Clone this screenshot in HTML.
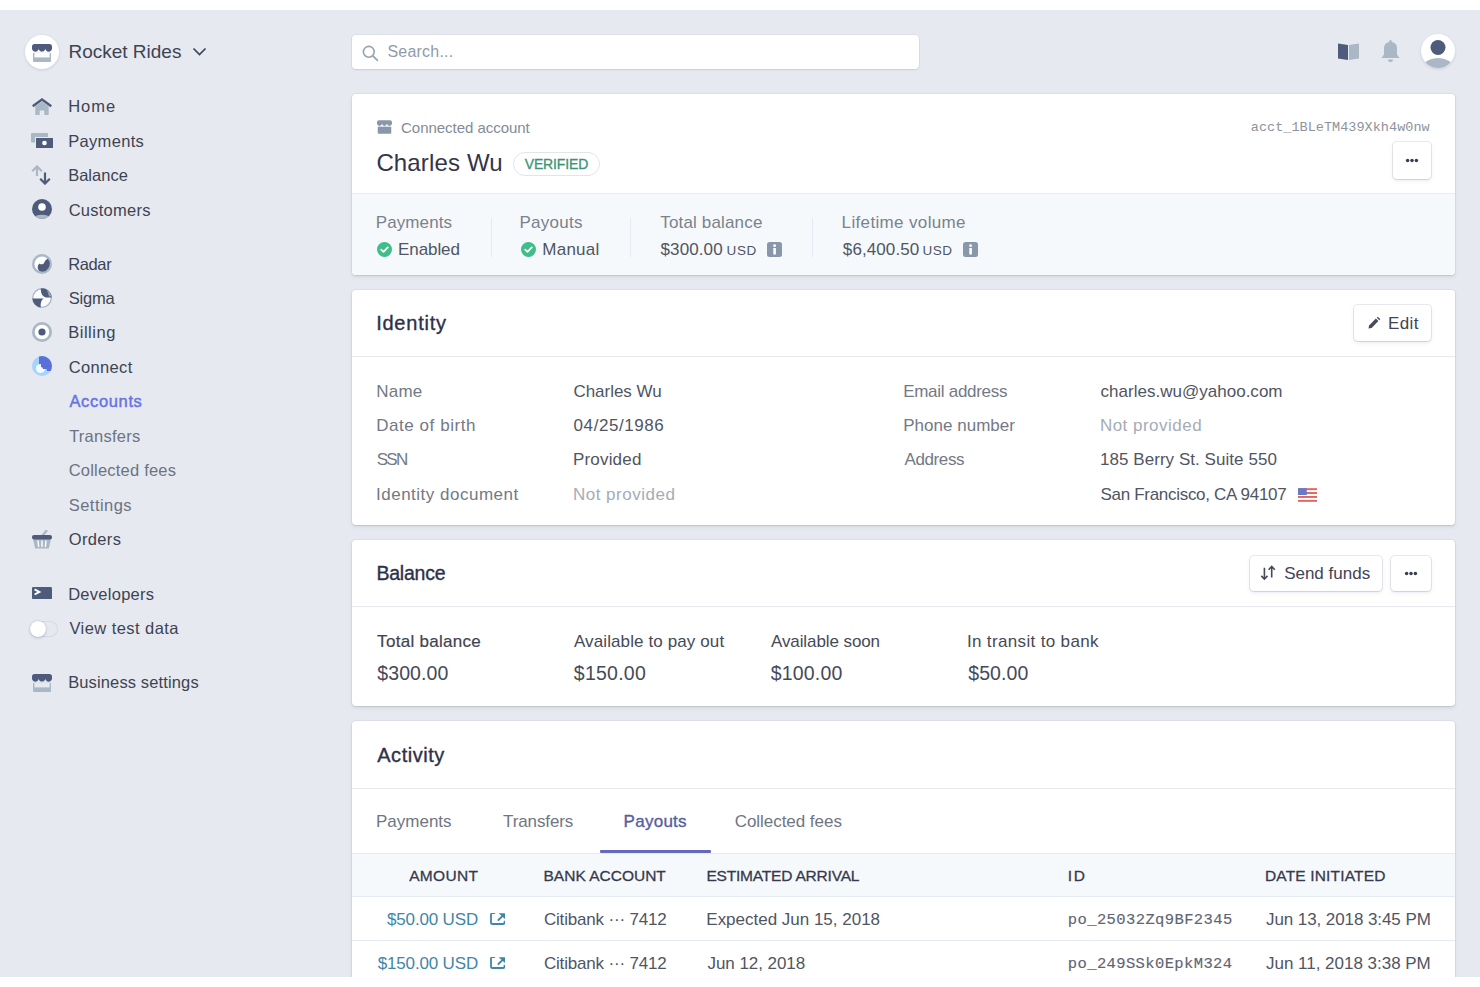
<!DOCTYPE html>
<html><head><meta charset="utf-8"><title>Rocket Rides - Charles Wu</title>
<style>
html,body{margin:0;padding:0;}
body{width:1480px;height:987px;position:relative;overflow:hidden;background:#fff;font-family:'Liberation Sans', sans-serif;}
#bg{position:absolute;left:0;top:10px;width:1480px;height:967px;background:#e6e9f0;overflow:hidden;}
.t{position:absolute;white-space:nowrap;line-height:1;}
</style></head><body>
<div id="bg">
<div style="position:absolute;left:0;top:-10px;width:1480px;height:987px">
<div style="position:absolute;left:25px;top:35px;width:34px;height:34px;border-radius:50%;background:#fff;box-shadow:0 1px 3px rgba(50,50,93,.15)"></div>
<svg style="position:absolute;left:32px;top:43.5px" width="20" height="18" viewBox="0 0 20 18">
<rect x="1" y="8.8" width="18" height="9.2" rx="1" fill="#aab7c4"/>
<rect x="2.4" y="8.8" width="15.2" height="4.6" fill="#fff"/>
<path d="M0 2.6A2.6 2.6 0 0 1 2.6 0h14.8A2.6 2.6 0 0 1 20 2.6V4.8A3.38 3.38 0 0 1 13.33 4.8 3.38 3.38 0 0 1 6.67 4.8 3.38 3.38 0 0 1 0 4.8z" fill="#4f5b7a"/>
</svg>
<div class="t" id="t0" style="left:68.43px;top:42.32px;font-size:19px;color:#3e4352;">Rocket Rides</div>
<svg style="position:absolute;left:192px;top:47px" width="15" height="10" viewBox="0 0 15 10"><path d="M1.5 1.5l6 6 6-6" fill="none" stroke="#3d4459" stroke-width="1.7"/></svg>
<div class="t" id="t1" style="left:68.14px;top:98.33px;font-size:16.5px;color:#3e4352;letter-spacing:1.022px;">Home</div>
<div class="t" id="t2" style="left:68.14px;top:132.73px;font-size:16.5px;color:#3e4352;letter-spacing:0.339px;">Payments</div>
<div class="t" id="t3" style="left:68.14px;top:166.73px;font-size:16.5px;color:#3e4352;letter-spacing:0.026px;">Balance</div>
<div class="t" id="t4" style="left:68.67px;top:201.53px;font-size:16.5px;color:#3e4352;letter-spacing:0.254px;">Customers</div>
<div class="t" id="t5" style="left:68.14px;top:255.83px;font-size:16.5px;color:#3e4352;letter-spacing:-0.356px;">Radar</div>
<div class="t" id="t6" style="left:68.76px;top:290.03px;font-size:16.5px;color:#3e4352;letter-spacing:-0.212px;">Sigma</div>
<div class="t" id="t7" style="left:68.14px;top:324.33px;font-size:16.5px;color:#3e4352;letter-spacing:0.548px;">Billing</div>
<div class="t" id="t8" style="left:68.67px;top:358.53px;font-size:16.5px;color:#3e4352;letter-spacing:0.366px;">Connect</div>
<div class="t" id="t9" style="left:69.46px;top:393.43px;font-size:16.5px;color:#6772e5;letter-spacing:0.650px;-webkit-text-stroke:0.45px currentColor;">Accounts</div>
<div class="t" id="t10" style="left:69.13px;top:427.83px;font-size:16.5px;color:#6c7382;letter-spacing:0.247px;">Transfers</div>
<div class="t" id="t11" style="left:68.67px;top:462.33px;font-size:16.5px;color:#6c7382;letter-spacing:0.211px;">Collected fees</div>
<div class="t" id="t12" style="left:68.76px;top:497.03px;font-size:16.5px;color:#6c7382;letter-spacing:0.457px;">Settings</div>
<div class="t" id="t13" style="left:68.72px;top:531.23px;font-size:16.5px;color:#3e4352;letter-spacing:0.347px;">Orders</div>
<div class="t" id="t14" style="left:68.14px;top:585.73px;font-size:16.5px;color:#3e4352;letter-spacing:0.275px;">Developers</div>
<div class="t" id="t15" style="left:69.42px;top:619.93px;font-size:16.5px;color:#3e4352;letter-spacing:0.440px;">View test data</div>
<div class="t" id="t16" style="left:68.14px;top:673.83px;font-size:16.5px;color:#3e4352;letter-spacing:0.134px;">Business settings</div>
<svg style="position:absolute;left:32px;top:97.5px" width="20" height="17" viewBox="0 0 20 17">
<path d="M3.3 8.2L10 3.4l6.7 4.8V17h-4.4v-4.6H7.7V17H3.3z" fill="#aab7c4"/>
<path d="M10 0L20 7.2l-1.4 2L10 3 1.4 9.2 0 7.2z" fill="#4f5b7a"/></svg>
<svg style="position:absolute;left:31px;top:133.3px" width="23" height="15" viewBox="0 0 23 15">
<rect x="0" y="0" width="17" height="9.5" rx="1" fill="#aab7c4"/>
<rect x="4" y="4" width="19" height="11" fill="#e6e9f0"/>
<rect x="5" y="5" width="17" height="10" fill="#4f5b7a"/>
<circle cx="13.5" cy="10" r="2.3" fill="#fff"/></svg>
<svg style="position:absolute;left:31px;top:164.5px" width="21" height="20" viewBox="0 0 21 20">
<path d="M6 11V1.6M1.2 6.2L6 1.4l4.8 4.8" fill="none" stroke="#aab7c4" stroke-width="2.2"/>
<path d="M14 7.5v10.8M9.2 13.8L14 18.6l4.8-4.8" fill="none" stroke="#4f5b7a" stroke-width="2.2"/></svg>
<svg style="position:absolute;left:32px;top:199px" width="20" height="20" viewBox="0 0 20 20">
<defs><clipPath id="cuc"><circle cx="10" cy="10" r="10"/></clipPath></defs>
<circle cx="10" cy="10" r="10" fill="#4f5b7a"/>
<g clip-path="url(#cuc)"><ellipse cx="10" cy="20.5" rx="9" ry="4.8" fill="#aab7c4"/></g>
<circle cx="10" cy="8" r="3.8" fill="#fff"/></svg>
<svg style="position:absolute;left:32px;top:253.5px" width="20" height="20" viewBox="0 0 20 20">
<circle cx="10" cy="10" r="10" fill="#aab7c4"/>
<circle cx="10" cy="10" r="7.6" fill="#fff"/>
<path d="M15.8 4.8A7.6 7.6 0 0 1 7 16.8 5 5 0 0 1 7.5 9.5a3 3 0 0 0 5-1.5 5 5 0 0 1 3.3-3.2z" fill="#4f5b7a"/></svg>
<svg style="position:absolute;left:32px;top:288px" width="20" height="20" viewBox="0 0 20 20">
<circle cx="10" cy="10" r="9.3" fill="#fbfcfd" stroke="#aab7c4" stroke-width="1.3"/>
<path d="M8.8 0.4C8.6 5.5 10.5 9 14 9.4H19.7A9.7 9.7 0 0 0 8.8 0.4z" fill="#4f5b7a"/>
<path d="M14.6 2A9.7 9.7 0 0 1 19.5 8.6H17C16.5 6 15.8 4 14.6 2z" fill="#9aa6bb"/>
<path d="M0.4 10.6H12.2C9.6 11.2 8.2 15 8.8 19.6A9.7 9.7 0 0 1 0.4 10.6z" fill="#4f5b7a"/></svg>
<svg style="position:absolute;left:32px;top:322.3px" width="20" height="20" viewBox="0 0 20 20">
<circle cx="10" cy="10" r="10" fill="#aab7c4"/>
<circle cx="10" cy="10" r="7.3" fill="#fff"/>
<circle cx="10" cy="10" r="3.6" fill="#4f5b7a"/></svg>
<svg style="position:absolute;left:32px;top:356.3px" width="20" height="20" viewBox="0 0 20 20">
<defs><clipPath id="cnc"><circle cx="10" cy="10" r="10"/></clipPath></defs>
<circle cx="10" cy="10" r="10" fill="#a5d3fb"/>
<g clip-path="url(#cnc)">
<path d="M7 0h14v15h-6a4 4 0 0 0-4-4H7z" fill="#5b6fd8"/>
<circle cx="8.5" cy="12.5" r="4.6" fill="#f2fbff"/>
<path d="M9 8h3a3 3 0 0 1 3 3v2h-4a2 2 0 0 0-2-2z" fill="#5b6fd8"/>
</g></svg>
<svg style="position:absolute;left:32px;top:529.5px" width="20" height="19" viewBox="0 0 20 19">
<path d="M10.5 5.5L14.5 0.8" stroke="#aab7c4" stroke-width="2.2" stroke-linecap="round"/>
<path d="M1 9h18l-2.2 9.5H3.2z" fill="#aab7c4"/>
<rect x="0" y="5" width="20" height="4.5" rx="2" fill="#4f5b7a"/>
<path d="M6 11l.6 5.5M10 11v5.5M14 11l-.6 5.5" stroke="#fff" stroke-width="1.4" stroke-linecap="round"/></svg>
<svg style="position:absolute;left:32px;top:586.8px" width="20" height="12.5" viewBox="0 0 20 12.5">
<rect x="0" y="0" width="20" height="12.2" rx="1.3" fill="#4f5b7a"/>
<path d="M2.6 2.3L7.4 4.9 2.6 7.5" fill="none" stroke="#fff" stroke-width="1.9" stroke-linejoin="miter"/></svg>
<svg style="position:absolute;left:32px;top:673.8px" width="20" height="18" viewBox="0 0 20 18">
<rect x="1" y="8.8" width="18" height="9.2" rx="1" fill="#aab7c4"/>
<rect x="2.4" y="8.8" width="15.2" height="4.6" fill="#e6e9f0"/>
<path d="M0 2.6A2.6 2.6 0 0 1 2.6 0h14.8A2.6 2.6 0 0 1 20 2.6V4.8A3.38 3.38 0 0 1 13.33 4.8 3.38 3.38 0 0 1 6.67 4.8 3.38 3.38 0 0 1 0 4.8z" fill="#4f5b7a"/>
</svg>
<div style="position:absolute;left:30px;top:620.5px;width:28px;height:16.5px;border-radius:9px;background:#e6e9f0;box-shadow:inset 0 0 0 1px #d5dbe3;box-sizing:border-box"></div>
<div style="position:absolute;left:29.5px;top:620.5px;width:16.5px;height:16.5px;border-radius:50%;background:#fff;box-shadow:0 1px 3px rgba(50,50,93,.25),0 0 0 .5px rgba(50,50,93,.1)"></div>
<div style="position:absolute;left:352px;top:35px;width:567px;height:34px;background:#fff;border-radius:4px;box-shadow:0 1px 2px rgba(50,50,93,.12),0 0 0 1px rgba(50,50,93,.04)"></div>
<svg style="position:absolute;left:362px;top:44.5px" width="17" height="17" viewBox="0 0 17 17"><circle cx="6.8" cy="6.8" r="5.4" fill="none" stroke="#98a3b1" stroke-width="1.6"/><path d="M10.8 10.8l4.6 4.6" stroke="#98a3b1" stroke-width="1.7" stroke-linecap="round"/></svg>
<div class="t" id="t17" style="left:387.48px;top:44.26px;font-size:16px;color:#8f9bab;letter-spacing:0.204px;">Search...</div>
<svg style="position:absolute;left:1338px;top:42px" width="21" height="18" viewBox="0 0 21 18">
<path d="M0 1.5L10 3v15L0 16.5z" fill="#4f5b7a"/><path d="M11 3l10-1.5v15L11 18z" fill="#aab7c4"/></svg>
<svg style="position:absolute;left:1380px;top:39px" width="21" height="24" viewBox="0 0 21 24">
<path d="M10.5 1a1.2 1.2 0 0 1 1.2 1.2v.9A6.5 6.5 0 0 1 17 9.5v6l2.5 3.5h-18L4 15.5v-6a6.5 6.5 0 0 1 5.3-6.4v-.9A1.2 1.2 0 0 1 10.5 1z" fill="#aab7c4"/>
<path d="M8 20.5h5a2.5 2.5 0 0 1-5 0z" fill="#aab7c4"/></svg>
<div style="position:absolute;left:1421px;top:34px;width:34px;height:34px;border-radius:50%;background:#fff;overflow:hidden;box-shadow:0 1px 3px rgba(50,50,93,.15)"></div>
<svg style="position:absolute;left:1421px;top:34px" width="34" height="34" viewBox="0 0 34 34">
<defs><clipPath id="av"><circle cx="17" cy="17" r="17"/></clipPath></defs>
<g clip-path="url(#av)"><circle cx="17" cy="13.5" r="7.5" fill="#4f5b7a"/><ellipse cx="17" cy="33" rx="15" ry="9" fill="#aab7c4"/></g></svg>
<div style="position:absolute;left:352px;top:94px;width:1103px;height:181px;background:#fff;border-radius:4px;box-shadow:0 0 0 1px rgba(40,50,70,.04),0 2px 4px rgba(40,50,70,.09),0 1px 1.5px rgba(0,0,0,.08)"></div>
<div style="position:absolute;left:352px;top:193px;width:1103px;height:82px;background:#f6f9fb;border-top:1px solid #e8ecef;box-sizing:border-box;border-radius:0 0 4px 4px"></div>
<svg style="position:absolute;left:377px;top:120px" width="15" height="14" viewBox="0 0 20 18">
<rect x="1" y="8.8" width="18" height="9.2" rx="1" fill="#8898aa"/>
<rect x="2.4" y="8.8" width="15.2" height="4.6" fill="#8898aa"/>
<path d="M0 2.6A2.6 2.6 0 0 1 2.6 0h14.8A2.6 2.6 0 0 1 20 2.6V4.8A3.38 3.38 0 0 1 13.33 4.8 3.38 3.38 0 0 1 6.67 4.8 3.38 3.38 0 0 1 0 4.8z" fill="#8898aa"/>
</svg>
<div class="t" id="t18" style="left:401.05px;top:119.50px;font-size:15px;color:#858b97;letter-spacing:-0.037px;">Connected account</div>
<div class="t" id="t19" style="left:376.40px;top:150.88px;font-size:24px;color:#33354a;letter-spacing:0.146px;">Charles Wu</div>
<div style="position:absolute;left:513px;top:152px;width:87px;height:24px;border:1px solid #e0e5e7;border-radius:12px;box-sizing:border-box;background:#fff"></div>
<div class="t" id="t20" style="left:524.73px;top:157.05px;font-size:14px;color:#3b9475;letter-spacing:-0.148px;-webkit-text-stroke:0.3px currentColor;">VERIFIED</div>
<div class="t" id="t21" style="left:1250.76px;top:121.25px;font-size:13.5px;color:#8d939e;font-family:'Liberation Mono', monospace;letter-spacing:0.031px;">acct_1BLeTM439Xkh4w0nw</div>
<div style="position:absolute;left:1393px;top:142px;width:38px;height:37px;background:#fff;border-radius:4px;box-shadow:0 0 0 1px rgba(50,50,93,.1),0 2px 5px rgba(50,50,93,.08),0 1px 1.5px rgba(0,0,0,.07);"></div>
<svg style="position:absolute;left:1405px;top:158px" width="14" height="5" viewBox="0 0 14 5"><circle cx="2.6" cy="2.5" r="1.75" fill="#3a3f50"/><circle cx="7" cy="2.5" r="1.75" fill="#3a3f50"/><circle cx="11.4" cy="2.5" r="1.75" fill="#3a3f50"/></svg>
<div class="t" id="t22" style="left:375.80px;top:213.71px;font-size:17px;color:#7b818d;letter-spacing:0.087px;">Payments</div>
<div class="t" id="t23" style="left:398.10px;top:241.01px;font-size:17px;color:#4f5563;letter-spacing:-0.101px;">Enabled</div>
<div class="t" id="t24" style="left:519.40px;top:213.71px;font-size:17px;color:#7b818d;letter-spacing:0.278px;">Payouts</div>
<div class="t" id="t25" style="left:542.30px;top:241.01px;font-size:17px;color:#4f5563;letter-spacing:0.237px;">Manual</div>
<div class="t" id="t26" style="left:660.32px;top:213.71px;font-size:17px;color:#7b818d;letter-spacing:0.153px;">Total balance</div>
<div class="t" id="t27" style="left:660.53px;top:241.01px;font-size:17px;color:#4f5563;letter-spacing:0.112px;">$300.00</div>
<div class="t" id="t28" style="left:726.55px;top:243.97px;font-size:13.5px;color:#4f5563;letter-spacing:0.590px;">USD</div>
<div class="t" id="t29" style="left:841.60px;top:213.71px;font-size:17px;color:#7b818d;letter-spacing:0.349px;">Lifetime volume</div>
<div class="t" id="t30" style="left:842.83px;top:241.01px;font-size:17px;color:#4f5563;letter-spacing:0.100px;">$6,400.50</div>
<div class="t" id="t31" style="left:922.45px;top:243.97px;font-size:13.5px;color:#4f5563;letter-spacing:0.540px;">USD</div>
<div style="position:absolute;left:490.5px;top:218px;width:1px;height:39px;background:#e6ebf1"></div>
<div style="position:absolute;left:630px;top:218px;width:1px;height:39px;background:#e6ebf1"></div>
<div style="position:absolute;left:812px;top:218px;width:1px;height:39px;background:#e6ebf1"></div>
<svg style="position:absolute;left:377px;top:241.5px" width="15" height="15" viewBox="0 0 15 15"><circle cx="7.5" cy="7.5" r="7.5" fill="#40bd88"/><path d="M4.2 7.6l2.3 2.2 4.3-4.4" fill="none" stroke="#fff" stroke-width="1.8" stroke-linecap="round" stroke-linejoin="round"/></svg>
<svg style="position:absolute;left:521px;top:241.5px" width="15" height="15" viewBox="0 0 15 15"><circle cx="7.5" cy="7.5" r="7.5" fill="#40bd88"/><path d="M4.2 7.6l2.3 2.2 4.3-4.4" fill="none" stroke="#fff" stroke-width="1.8" stroke-linecap="round" stroke-linejoin="round"/></svg>
<svg style="position:absolute;left:767px;top:242px" width="15" height="15" viewBox="0 0 15 15"><rect width="15" height="15" rx="2.5" fill="#8898aa"/><rect x="6.3" y="6" width="2.6" height="6.5" fill="#fff"/><circle cx="7.6" cy="3.7" r="1.4" fill="#fff"/></svg>
<svg style="position:absolute;left:963px;top:242px" width="15" height="15" viewBox="0 0 15 15"><rect width="15" height="15" rx="2.5" fill="#8898aa"/><rect x="6.3" y="6" width="2.6" height="6.5" fill="#fff"/><circle cx="7.6" cy="3.7" r="1.4" fill="#fff"/></svg>
<div style="position:absolute;left:352px;top:290px;width:1103px;height:235px;background:#fff;border-radius:4px;box-shadow:0 0 0 1px rgba(40,50,70,.04),0 2px 4px rgba(40,50,70,.09),0 1px 1.5px rgba(0,0,0,.08)"></div>
<div style="position:absolute;left:352px;top:356px;width:1103px;height:1px;background:#e6ebf1"></div>
<div class="t" id="t32" style="left:376.15px;top:313.37px;font-size:20px;color:#2e3048;letter-spacing:0.774px;-webkit-text-stroke:0.35px currentColor;">Identity</div>
<div style="position:absolute;left:1354px;top:305px;width:77px;height:36px;background:#fff;border-radius:4px;box-shadow:0 0 0 1px rgba(50,50,93,.1),0 2px 5px rgba(50,50,93,.08),0 1px 1.5px rgba(0,0,0,.07);"></div>
<svg style="position:absolute;left:1367px;top:316px" width="14" height="14" viewBox="0 0 14 14"><path d="M1.5 12.5l.6-3.1 6.8-6.8 2.5 2.5-6.8 6.8z" fill="#454a5a"/><path d="M9.8 1.7l1-1 2.5 2.5-1 1z" fill="#454a5a"/></svg>
<div class="t" id="t33" style="left:1388.10px;top:314.91px;font-size:17px;color:#3f4456;letter-spacing:0.347px;">Edit</div>
<div class="t" id="t34" style="left:376.20px;top:382.71px;font-size:17px;color:#737985;letter-spacing:0.232px;">Name</div>
<div class="t" id="t35" style="left:573.45px;top:382.71px;font-size:17px;color:#4f5563;letter-spacing:-0.037px;">Charles Wu</div>
<div class="t" id="t36" style="left:903.20px;top:382.71px;font-size:17px;color:#737985;letter-spacing:-0.285px;">Email address</div>
<div class="t" id="t37" style="left:1100.58px;top:382.71px;font-size:17px;color:#4f5563;letter-spacing:0.014px;">charles.wu@yahoo.com</div>
<div class="t" id="t38" style="left:376.20px;top:417.21px;font-size:17px;color:#737985;letter-spacing:0.556px;">Date of birth</div>
<div class="t" id="t39" style="left:573.62px;top:417.21px;font-size:17px;color:#4f5563;letter-spacing:0.560px;">04/25/1986</div>
<div class="t" id="t40" style="left:903.20px;top:417.21px;font-size:17px;color:#737985;letter-spacing:0.022px;">Phone number</div>
<div class="t" id="t41" style="left:1099.90px;top:417.21px;font-size:17px;color:#a6acb6;letter-spacing:0.490px;">Not provided</div>
<div class="t" id="t42" style="left:376.84px;top:451.41px;font-size:17px;color:#737985;letter-spacing:-1.796px;">SSN</div>
<div class="t" id="t43" style="left:572.90px;top:451.41px;font-size:17px;color:#4f5563;letter-spacing:0.198px;">Provided</div>
<div class="t" id="t44" style="left:904.56px;top:451.41px;font-size:17px;color:#737985;letter-spacing:-0.405px;">Address</div>
<div class="t" id="t45" style="left:1100.02px;top:451.41px;font-size:17px;color:#4f5563;letter-spacing:0.048px;">185 Berry St. Suite 550</div>
<div class="t" id="t46" style="left:376.03px;top:486.01px;font-size:17px;color:#737985;letter-spacing:0.501px;">Identity document</div>
<div class="t" id="t47" style="left:572.90px;top:486.01px;font-size:17px;color:#a6acb6;letter-spacing:0.508px;">Not provided</div>
<div class="t" id="t48" style="left:1100.53px;top:486.01px;font-size:17px;color:#4f5563;letter-spacing:-0.302px;">San Francisco, CA 94107</div>
<svg style="position:absolute;left:1297.5px;top:488.3px" width="19.5" height="14" viewBox="0 0 20 14">
<rect width="20" height="14" fill="#fff"/>
<g fill="#e0675f"><rect y="0" width="20" height="2"/><rect y="4" width="20" height="2"/><rect y="8" width="20" height="2"/><rect y="12" width="20" height="2"/></g>
<rect width="9" height="7" fill="#6a78c8"/></svg>
<div style="position:absolute;left:352px;top:540px;width:1103px;height:166px;background:#fff;border-radius:4px;box-shadow:0 0 0 1px rgba(40,50,70,.04),0 2px 4px rgba(40,50,70,.09),0 1px 1.5px rgba(0,0,0,.08)"></div>
<div style="position:absolute;left:352px;top:606px;width:1103px;height:1px;background:#e6ebf1"></div>
<div class="t" id="t49" style="left:376.49px;top:563.59px;font-size:19.5px;color:#2e3048;letter-spacing:-0.235px;-webkit-text-stroke:0.35px currentColor;">Balance</div>
<div style="position:absolute;left:1249.5px;top:555.5px;width:132px;height:35px;background:#fff;border-radius:4px;box-shadow:0 0 0 1px rgba(50,50,93,.1),0 2px 5px rgba(50,50,93,.08),0 1px 1.5px rgba(0,0,0,.07);"></div>
<svg style="position:absolute;left:1260px;top:565px" width="16" height="16" viewBox="0 0 16 16"><path d="M4.4 2.7v11.5M1.3 10.9l3.1 3.3 3.1-3.3" fill="none" stroke="#454a5a" stroke-width="1.6"/><path d="M11.7 12.5V1.5M8.6 4.8l3.1-3.3 3.1 3.3" fill="none" stroke="#454a5a" stroke-width="1.6"/></svg>
<div class="t" id="t50" style="left:1284.13px;top:564.91px;font-size:17px;color:#3f4456;">Send funds</div>
<div style="position:absolute;left:1391px;top:555.5px;width:40px;height:35px;background:#fff;border-radius:4px;box-shadow:0 0 0 1px rgba(50,50,93,.1),0 2px 5px rgba(50,50,93,.08),0 1px 1.5px rgba(0,0,0,.07);"></div>
<svg style="position:absolute;left:1404px;top:570.5px" width="14" height="5" viewBox="0 0 14 5"><circle cx="2.6" cy="2.5" r="1.75" fill="#3a3f50"/><circle cx="7" cy="2.5" r="1.75" fill="#3a3f50"/><circle cx="11.4" cy="2.5" r="1.75" fill="#3a3f50"/></svg>
<div class="t" id="t51" style="left:377.12px;top:632.61px;font-size:17px;color:#3f4452;letter-spacing:0.287px;-webkit-text-stroke:0.2px currentColor;">Total balance</div>
<div class="t" id="t52" style="left:573.96px;top:632.61px;font-size:17px;color:#454a58;letter-spacing:0.111px;">Available to pay out</div>
<div class="t" id="t53" style="left:770.96px;top:632.61px;font-size:17px;color:#454a58;letter-spacing:-0.088px;">Available soon</div>
<div class="t" id="t54" style="left:966.93px;top:632.61px;font-size:17px;color:#454a58;letter-spacing:0.346px;">In transit to bank</div>
<div class="t" id="t55" style="left:377.31px;top:664.09px;font-size:19.5px;color:#454a58;letter-spacing:0.076px;">$300.00</div>
<div class="t" id="t56" style="left:573.80px;top:664.09px;font-size:19.5px;color:#454a58;letter-spacing:0.243px;">$150.00</div>
<div class="t" id="t57" style="left:770.80px;top:664.09px;font-size:19.5px;color:#454a58;letter-spacing:0.160px;">$100.00</div>
<div class="t" id="t58" style="left:968.30px;top:664.09px;font-size:19.5px;color:#454a58;letter-spacing:0.061px;">$50.00</div>
<div style="position:absolute;left:352px;top:721px;width:1103px;height:300px;background:#fff;border-radius:4px;box-shadow:0 0 0 1px rgba(40,50,70,.04),0 2px 4px rgba(40,50,70,.09),0 1px 1.5px rgba(0,0,0,.08)"></div>
<div style="position:absolute;left:352px;top:788px;width:1103px;height:1px;background:#e6ebf1"></div>
<div class="t" id="t59" style="left:377.25px;top:744.57px;font-size:20px;color:#2e3048;letter-spacing:0.523px;-webkit-text-stroke:0.35px currentColor;">Activity</div>
<div class="t" id="t60" style="left:376.00px;top:813.11px;font-size:17px;color:#6f7683;">Payments</div>
<div class="t" id="t61" style="left:503.02px;top:813.11px;font-size:17px;color:#6f7683;letter-spacing:-0.111px;">Transfers</div>
<div class="t" id="t62" style="left:623.60px;top:813.11px;font-size:17px;color:#585d9f;letter-spacing:0.262px;-webkit-text-stroke:0.35px currentColor;">Payouts</div>
<div class="t" id="t63" style="left:734.65px;top:813.11px;font-size:17px;color:#6f7683;letter-spacing:-0.037px;">Collected fees</div>
<div style="position:absolute;left:600px;top:850px;width:111px;height:2.7px;background:#6469bd;border-radius:1px"></div>
<div style="position:absolute;left:352px;top:853px;width:1103px;height:44px;background:#f6f9fb;border-top:1px solid #e6ebf1;border-bottom:1px solid #e6ebf1;box-sizing:border-box"></div>
<div class="t" id="t64" style="left:409.16px;top:867.98px;font-size:15.5px;color:#363a4e;letter-spacing:0.328px;-webkit-text-stroke:0.3px currentColor;">AMOUNT</div>
<div class="t" id="t65" style="left:543.52px;top:867.98px;font-size:15.5px;color:#363a4e;-webkit-text-stroke:0.3px currentColor;">BANK ACCOUNT</div>
<div class="t" id="t66" style="left:706.42px;top:867.98px;font-size:15.5px;color:#363a4e;letter-spacing:-0.199px;-webkit-text-stroke:0.3px currentColor;">ESTIMATED ARRIVAL</div>
<div class="t" id="t67" style="left:1067.77px;top:867.98px;font-size:15.5px;color:#363a4e;letter-spacing:1.665px;-webkit-text-stroke:0.3px currentColor;">ID</div>
<div class="t" id="t68" style="left:1265.02px;top:867.98px;font-size:15.5px;color:#363a4e;letter-spacing:0.157px;-webkit-text-stroke:0.3px currentColor;">DATE INITIATED</div>
<div style="position:absolute;left:352px;top:940px;width:1103px;height:1px;background:#e6ebf1"></div>
<div class="t" id="t69" style="left:387.03px;top:911.01px;font-size:17px;color:#3f86a8;letter-spacing:-0.160px;">$50.00 USD</div>
<svg style="position:absolute;left:489.7px;top:913.0px" width="15.5" height="12" viewBox="0 0 15.5 12"><path d="M4.3 1H2.6A1.6 1.6 0 0 0 1 2.6v7.8A1.6 1.6 0 0 0 2.6 12h10.3a1.6 1.6 0 0 0 1.6-1.6V9.6" fill="none" stroke="#3f86a8" stroke-width="1.8" stroke-linecap="round" transform="translate(0 -1)"/><path d="M8.6 0.2h5.8a.9.9 0 0 1 .9.9v5.2z" fill="#3f86a8"/><path d="M13.2 2.3L8.4 7" stroke="#3f86a8" stroke-width="1.8" stroke-linecap="round"/></svg>
<div class="t" id="t70" style="left:543.95px;top:911.01px;font-size:17px;color:#4f5563;letter-spacing:-0.184px;">Citibank &middot;&middot;&middot; 7412</div>
<div class="t" id="t71" style="left:706.30px;top:911.01px;font-size:17px;color:#4f5563;letter-spacing:-0.009px;">Expected Jun 15, 2018</div>
<div class="t" id="t72" style="left:1067.84px;top:912.72px;font-size:15.5px;color:#5f6473;font-family:'Liberation Mono', monospace;letter-spacing:0.393px;-webkit-text-stroke:0.15px currentColor;">po_25032Zq9BF2345</div>
<div class="t" id="t73" style="left:1266.04px;top:911.01px;font-size:17px;color:#4f5563;letter-spacing:-0.083px;">Jun 13, 2018 3:45 PM</div>
<div class="t" id="t74" style="left:377.73px;top:954.81px;font-size:17px;color:#3f86a8;letter-spacing:-0.160px;">$150.00 USD</div>
<svg style="position:absolute;left:489.7px;top:956.8000000000001px" width="15.5" height="12" viewBox="0 0 15.5 12"><path d="M4.3 1H2.6A1.6 1.6 0 0 0 1 2.6v7.8A1.6 1.6 0 0 0 2.6 12h10.3a1.6 1.6 0 0 0 1.6-1.6V9.6" fill="none" stroke="#3f86a8" stroke-width="1.8" stroke-linecap="round" transform="translate(0 -1)"/><path d="M8.6 0.2h5.8a.9.9 0 0 1 .9.9v5.2z" fill="#3f86a8"/><path d="M13.2 2.3L8.4 7" stroke="#3f86a8" stroke-width="1.8" stroke-linecap="round"/></svg>
<div class="t" id="t75" style="left:543.95px;top:954.81px;font-size:17px;color:#4f5563;letter-spacing:-0.184px;">Citibank &middot;&middot;&middot; 7412</div>
<div class="t" id="t76" style="left:707.45px;top:954.81px;font-size:17px;color:#4f5563;letter-spacing:-0.047px;">Jun 12, 2018</div>
<div class="t" id="t77" style="left:1067.84px;top:956.52px;font-size:15.5px;color:#5f6473;font-family:'Liberation Mono', monospace;letter-spacing:0.381px;-webkit-text-stroke:0.15px currentColor;">po_249SSk0EpkM324</div>
<div class="t" id="t78" style="left:1266.04px;top:954.81px;font-size:17px;color:#4f5563;letter-spacing:-0.017px;">Jun 11, 2018 3:38 PM</div>
</div>
</div>
</body></html>
